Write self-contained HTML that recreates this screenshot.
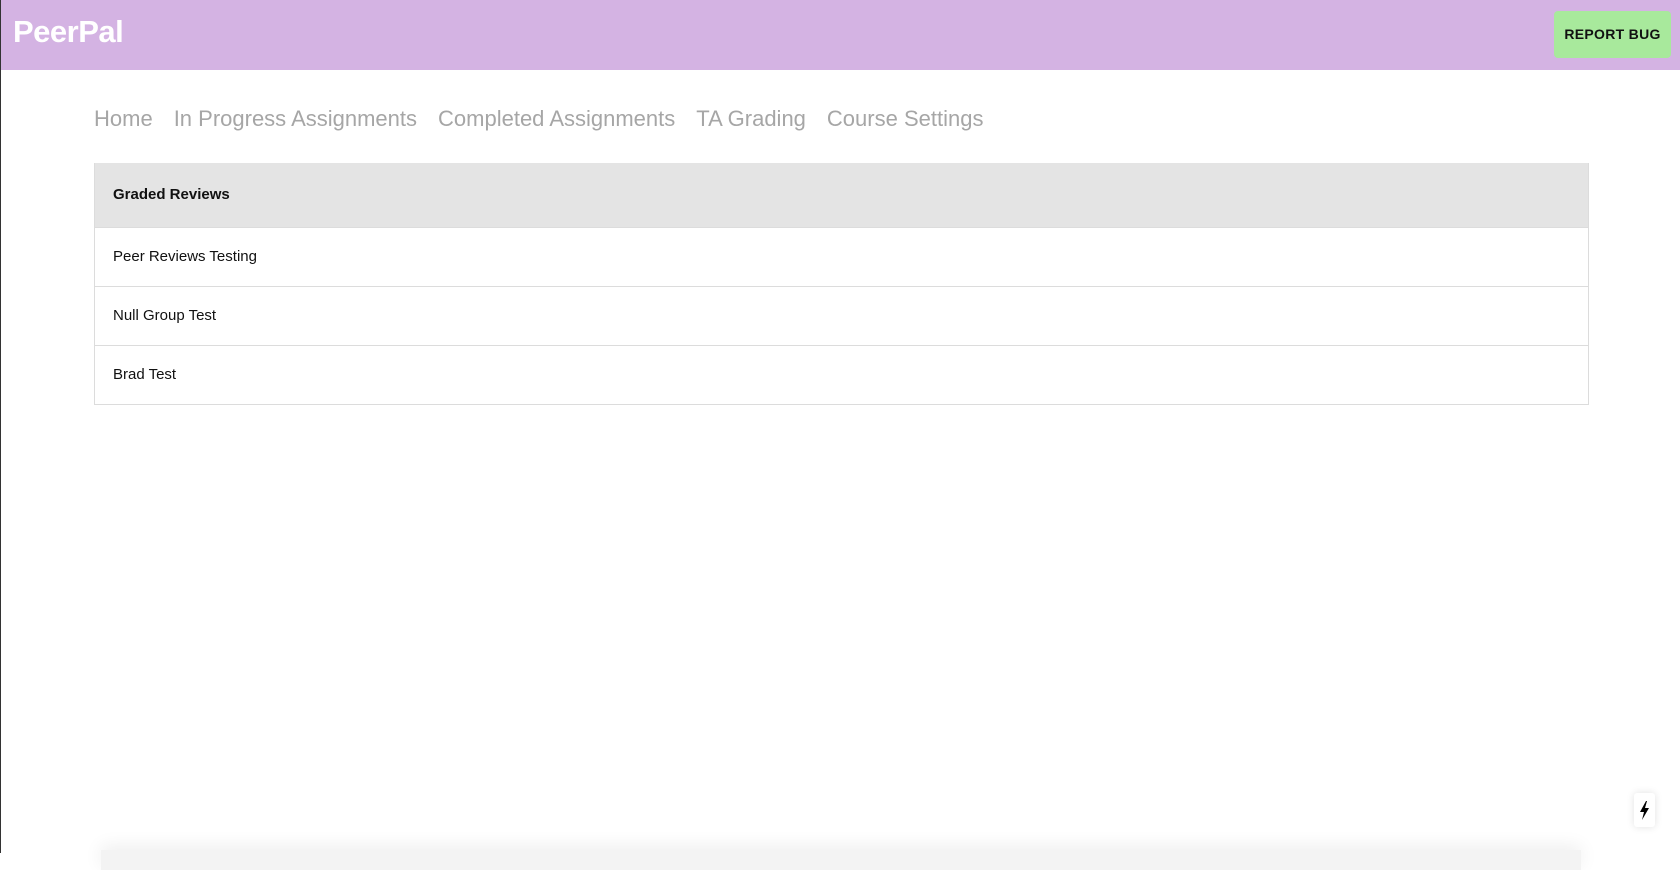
<!DOCTYPE html>
<html><head><style>
body{margin:0;width:1680px;height:853px;overflow:hidden;background:#fff;font-family:"Liberation Sans",Arial,sans-serif;position:relative;border-left:1px solid #333;box-sizing:border-box}
.hdr{position:absolute;left:0;top:0;width:1680px;height:70px;background:#d4b3e3}
.logo{position:absolute;left:12px;top:14px;font-size:31px;font-weight:bold;color:#fff;letter-spacing:-0.5px}
.btn{position:absolute;left:1553px;top:11px;width:117px;height:47px;background:#a8e99c;border-radius:4px;font-size:14px;font-weight:bold;color:#111;text-align:center;line-height:47px;letter-spacing:0.3px}
.nav{position:absolute;left:93px;top:106px;font-size:22px;color:#a6a6a6;white-space:nowrap}
.nav span{margin-right:21px}
.tbl{position:absolute;left:93px;top:163px;width:1495px;border:1px solid #dcdcdc;border-top:none;box-sizing:border-box}
.th{height:64px;background:#e4e4e4;line-height:64px;padding-left:18px;font-size:15px;font-weight:bold;color:#111}
.tr{height:58px;line-height:58px;border-top:1px solid #dcdcdc;padding-left:18px;font-size:15px;color:#111}
.bolt{position:absolute;left:1633px;top:793px;width:21px;height:34px;background:#fff;border-radius:3px;box-shadow:0 0 8px rgba(0,0,0,.12)}
.shadow{position:absolute;left:100px;top:850px;width:1480px;height:20px;box-shadow:0 -4px 18px rgba(0,0,0,.07);background:#f3f3f3}
</style></head><body>
<div class="hdr"><div class="logo">PeerPal</div><div class="btn">REPORT BUG</div></div>
<div class="nav"><span>Home</span><span>In Progress Assignments</span><span>Completed Assignments</span><span>TA Grading</span><span>Course Settings</span></div>
<div class="tbl">
<div class="th">Graded Reviews</div>
<div class="tr">Peer Reviews Testing</div>
<div class="tr">Null Group Test</div>
<div class="tr">Brad Test</div>
</div>
<div class="shadow"></div>
<div class="bolt"><svg width="21" height="34" viewBox="0 0 21 34"><path d="M12 8 L6 19 L10 19 L8 27 L15 15 L11 15 L13 8 Z" fill="#000"/></svg></div>
</body></html>
